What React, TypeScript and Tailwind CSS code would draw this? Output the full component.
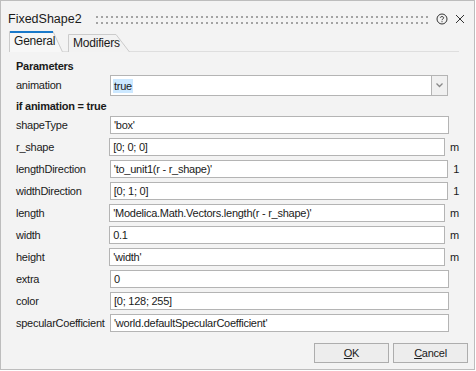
import React from "react";

const rows = [
  { label: "shapeType", value: "'box'", unit: "" },
  { label: "r_shape", value: "[0; 0; 0]", unit: "m" },
  { label: "lengthDirection", value: "'to_unit1(r - r_shape)'", unit: "1" },
  { label: "widthDirection", value: "[0; 1; 0]", unit: "1" },
  { label: "length", value: "'Modelica.Math.Vectors.length(r - r_shape)'", unit: "m" },
  { label: "width", value: "0.1", unit: "m" },
  { label: "height", value: "'width'", unit: "m" },
  { label: "extra", value: "0", unit: "" },
  { label: "color", value: "[0; 128; 255]", unit: "" },
  { label: "specularCoefficient", value: "'world.defaultSpecularCoefficient'", unit: "" },
];

const Dots = () => (
  <svg className="h-[8px] flex-1" preserveAspectRatio="none">
    <defs>
      <pattern id="grip" width="5" height="6" patternUnits="userSpaceOnUse">
        <rect x="0" y="0" width="2" height="2" fill="#a3a3a3" />
      </pattern>
    </defs>
    <rect x="0" y="0" width="100%" height="8" fill="url(#grip)" />
  </svg>
);

const Tab = ({ label, active }: { label: string; active?: boolean }) => {
  const w = active ? 54 : 62;
  const h = active ? 21 : 18;
  const slant = active ? 10 : 14;
  return (
    <div
      className={`relative flex items-center ${active ? "h-[21px] w-[54px] pl-[5px] pb-[1px]" : "h-[18px] w-[62px] pl-[5px]"}`}
    >
      <svg className="absolute inset-0" width={w} height={h}>
        <path
          d={`M0.5 ${h} V0.5 H${w - slant} L${w - 0.5} ${h}`}
          fill={active ? "#f7f7f7" : "#f2f2f2"}
          stroke="#cbcbcb"
        />
        {active && <path d={`M1 1 H${w - slant}`} stroke="#1979ca" strokeWidth="2" />}
      </svg>
      <span className="relative text-[12px] leading-[16px] tracking-[-0.2px] text-[#1a1a1a]">{label}</span>
    </div>
  );
};

export default function App() {
  return (
    <div className="h-[371px] w-[476px] bg-white" style={{ fontFamily: '"Liberation Sans", Arial, sans-serif' }}>
      <div className="flex h-[370px] w-[475px] flex-col border border-[#bdbdbd] bg-[#f3f3f3]">
        {/* title */}
        <div className="flex h-[30px] items-center pl-[7px] pr-[9px] pt-[6px]">
          <span className="text-[12.5px] leading-[16px] text-[#1a1a1a]">FixedShape2</span>
          <div className="ml-[14px] mr-[4px] flex flex-1 pt-[2px]">
            <Dots />
          </div>
          <svg width="12" height="12" viewBox="0 0 12 12" className="ml-[2px]">
            <circle cx="6" cy="6" r="5" fill="none" stroke="#333" strokeWidth="1" />
            <path d="M4.3 4.7 C4.3 3.2 7.7 3.2 7.7 4.8 C7.7 6 6 5.9 6 7.2" fill="none" stroke="#333" strokeWidth="1" />
            <rect x="5.5" y="8.2" width="1" height="1" fill="#333" />
          </svg>
          <svg width="10" height="10" viewBox="0 0 10 10" className="ml-[7px]">
            <path d="M1 1 L9 9 M9 1 L1 9" stroke="#333" strokeWidth="1" />
          </svg>
        </div>

        {/* tabs */}
        <div className="flex h-[21px] items-end pl-[8px] pr-[15px]">
          <Tab label="General" active />
          <div className="flex h-[21px] flex-1 items-end border-b border-[#dedede]">
            <div className="ml-[5px] mb-[-1px]">
              <Tab label="Modifiers" />
            </div>
          </div>
        </div>

        {/* content */}
        <div className="flex flex-1 flex-col px-[15px] pt-[6px] text-[11px] tracking-[-0.25px] text-[#1a1a1a]">
          <div className="h-[17px] leading-[17px] font-bold">Parameters</div>
          <div className="flex h-[21px] items-center">
            <div className="w-[94px]">animation</div>
            <div className="flex h-[21px] w-[322px] items-center border border-[#b4b4b4] bg-white pl-[2px]">
              <span className="bg-[#cce8ff] px-[1px] leading-[14px]">true</span>
            </div>
            <div className="flex h-[21px] w-[16px] items-center justify-center border border-l-0 border-[#b4b4b4] bg-[#f0f0f0]">
              <svg width="7" height="5" viewBox="0 0 7 5">
                <path d="M0.5 0.5 L3.5 3.5 L6.5 0.5" fill="none" stroke="#888" strokeWidth="1.3" />
              </svg>
            </div>
          </div>
          <div className="h-[20px] leading-[20px] font-bold">if animation = true</div>
          <div className="flex flex-col gap-[4px]">
            {rows.map((r) => (
              <div key={r.label} className="flex h-[18px] items-center">
                <div className="w-[94px] whitespace-nowrap">{r.label}</div>
                <div className="flex h-[18px] w-[339px] items-center border border-[#b4b4b4] bg-white pl-[3px] whitespace-nowrap">
                  {r.value}
                </div>
                <div className="pl-[5px]">{r.unit}</div>
              </div>
            ))}
          </div>
          <div className="mt-auto mb-[6px] mr-[-9px] flex justify-end gap-[4px]">
            <button className="h-[20px] w-[75px] border border-[#adadad] bg-[#ededed] text-[11px] text-[#1a1a1a]">
              <span className="underline">O</span>K
            </button>
            <button className="h-[20px] w-[75px] border border-[#adadad] bg-[#ededed] text-[11px] text-[#1a1a1a]">
              <span className="underline">C</span>ancel
            </button>
          </div>
        </div>
      </div>
    </div>
  );
}
